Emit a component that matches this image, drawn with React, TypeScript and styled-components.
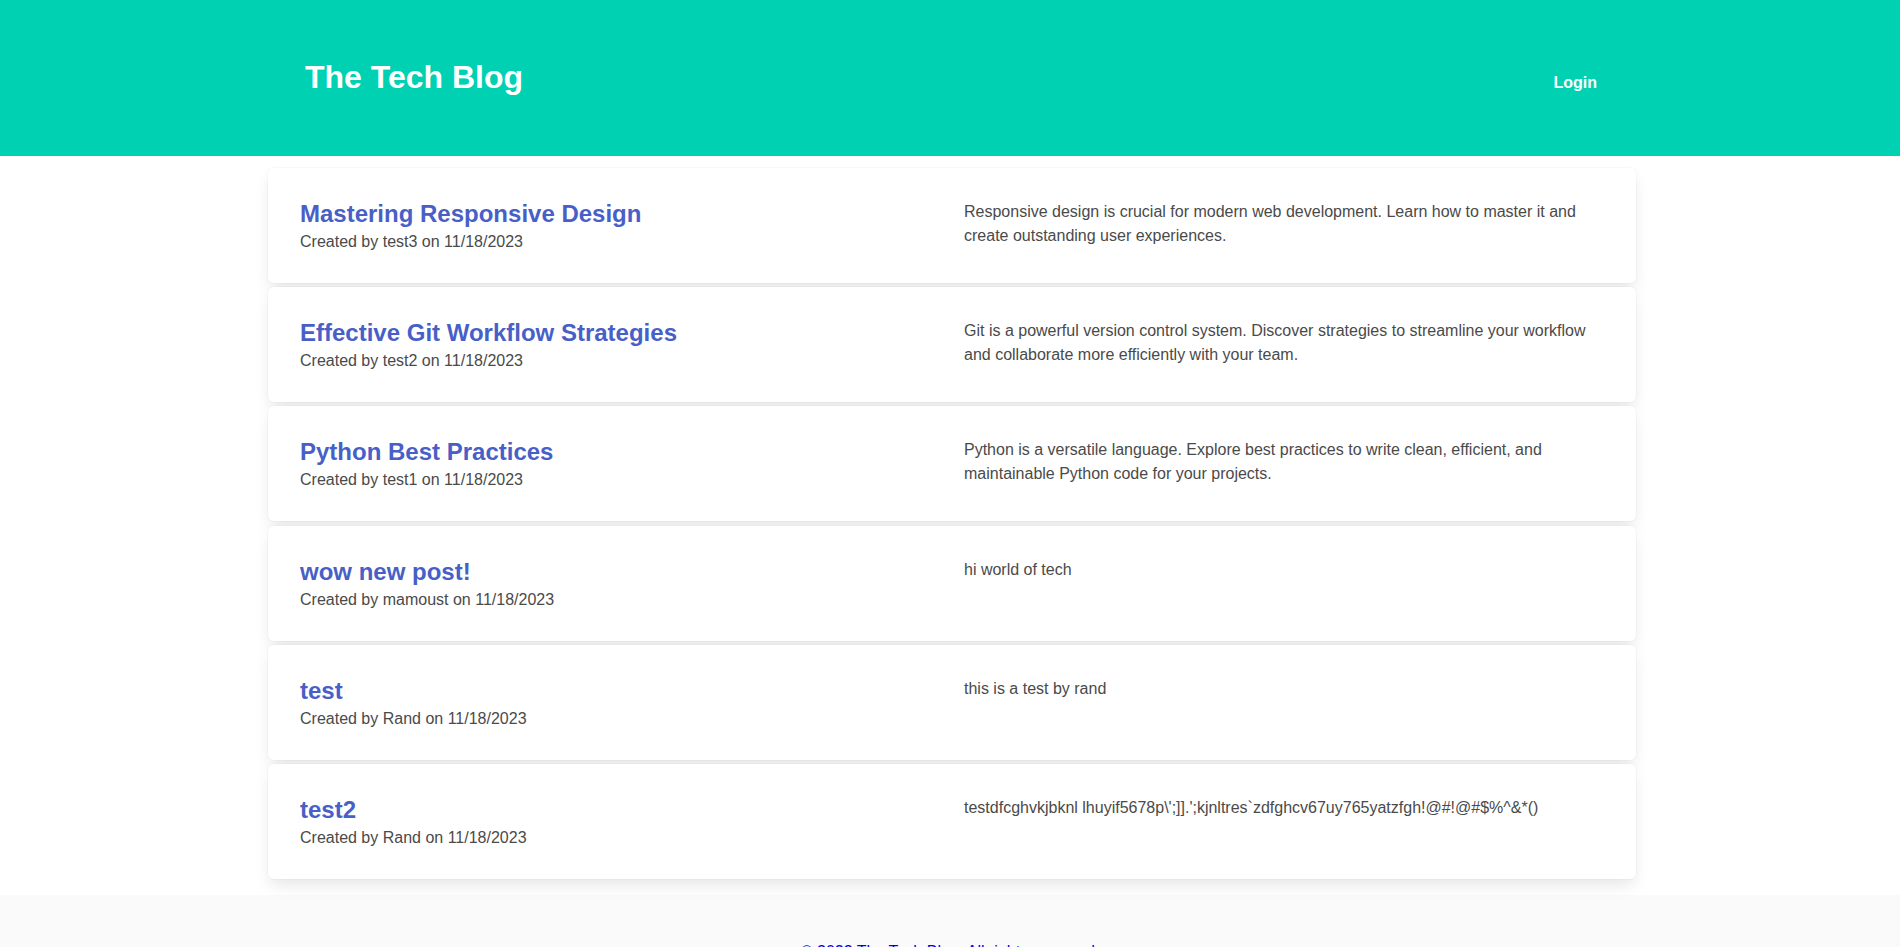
import React from "react";
import styled, { createGlobalStyle } from "styled-components";

const GlobalStyle = createGlobalStyle`
  html, body {
    margin: 0;
    padding: 0;
    background: #ffffff;
  }
  body {
    font-family: Arial, "Liberation Sans", Helvetica, sans-serif;
    font-size: 16px;
    line-height: 1.5;
    color: #4a4a4a;
  }
  * { box-sizing: border-box; }
`;

const Hero = styled.header`
  background: #00d1b2;
  height: 156px;
  display: flex;
  align-items: center;
`;

const HeroInner = styled.div`
  width: 1292px;
  margin-left: calc(50% - 645px);
  display: flex;
  justify-content: space-between;
  align-items: baseline;
`;

const SiteTitle = styled.h1`
  margin: 0;
  font-size: 32px;
  line-height: 32px;
  font-weight: 700;
  color: #ffffff;
`;

const LoginLink = styled.a`
  font-size: 16px;
  font-weight: 700;
  color: #ffffff;
  text-decoration: none;
  cursor: pointer;
`;

const Main = styled.main`
  padding-top: 12px;
  padding-bottom: 16px;
`;

const PostList = styled.section`
  width: 1368px;
  margin-left: calc(50% - 682px);
  display: flex;
  flex-direction: column;
  gap: 4.2px;
`;

const PostCard = styled.article`
  background: #ffffff;
  border-radius: 6px;
  box-shadow: 0 0.5em 1em -0.125em rgba(10, 10, 10, 0.1),
    0 0 0 1px rgba(10, 10, 10, 0.02);
  padding: 32px 32px 28px;
  display: grid;
  grid-template-columns: 1fr 1fr;
  column-gap: 24px;
`;

const PostHead = styled.div`
  display: flex;
  flex-direction: column;
`;

const PostTitle = styled.h2`
  margin: 0;
  font-size: 24px;
  line-height: 28px;
  font-weight: 700;
  color: #485fc7;
`;

const PostMeta = styled.p`
  margin: 0;
  font-size: 16px;
  line-height: 27px;
  color: #4a4a4a;
`;

const PostBody = styled.p`
  margin: 0;
  font-size: 16px;
  line-height: 24px;
  color: #4a4a4a;
`;

const Footer = styled.footer`
  background: #fafafa;
  padding: 45px 24px 96px;
  text-align: center;
`;

const FooterText = styled.p`
  margin: 0;
  font-size: 16px;
  line-height: 24px;
  color: #0000ee;
`;

type Post = {
  title: string;
  author: string;
  date: string;
  body: string;
};

const posts: Post[] = [
  {
    title: "Mastering Responsive Design",
    author: "test3",
    date: "11/18/2023",
    body:
      "Responsive design is crucial for modern web development. Learn how to master it and create outstanding user experiences.",
  },
  {
    title: "Effective Git Workflow Strategies",
    author: "test2",
    date: "11/18/2023",
    body:
      "Git is a powerful version control system. Discover strategies to streamline your workflow and collaborate more efficiently with your team.",
  },
  {
    title: "Python Best Practices",
    author: "test1",
    date: "11/18/2023",
    body:
      "Python is a versatile language. Explore best practices to write clean, efficient, and maintainable Python code for your projects.",
  },
  {
    title: "wow new post!",
    author: "mamoust",
    date: "11/18/2023",
    body: "hi world of tech",
  },
  {
    title: "test",
    author: "Rand",
    date: "11/18/2023",
    body: "this is a test by rand",
  },
  {
    title: "test2",
    author: "Rand",
    date: "11/18/2023",
    body:
      "testdfcghvkjbknl lhuyif5678p\\';]].';kjnltres`zdfghcv67uy765yatzfgh!@#!@#$%^&*()",
  },
];

export default function App() {
  return (
    <>
      <GlobalStyle />
      <Hero>
        <HeroInner>
          <SiteTitle>The Tech Blog</SiteTitle>
          <LoginLink>Login</LoginLink>
        </HeroInner>
      </Hero>
      <Main>
        <PostList>
          {posts.map((p) => (
            <PostCard key={p.title}>
              <PostHead>
                <PostTitle>{p.title}</PostTitle>
                <PostMeta>
                  Created by {p.author} on {p.date}
                </PostMeta>
              </PostHead>
              <PostBody>{p.body}</PostBody>
            </PostCard>
          ))}
        </PostList>
      </Main>
      <Footer>
        <FooterText>© 2023 The Tech Blog. All rights reserved.</FooterText>
      </Footer>
    </>
  );
}
